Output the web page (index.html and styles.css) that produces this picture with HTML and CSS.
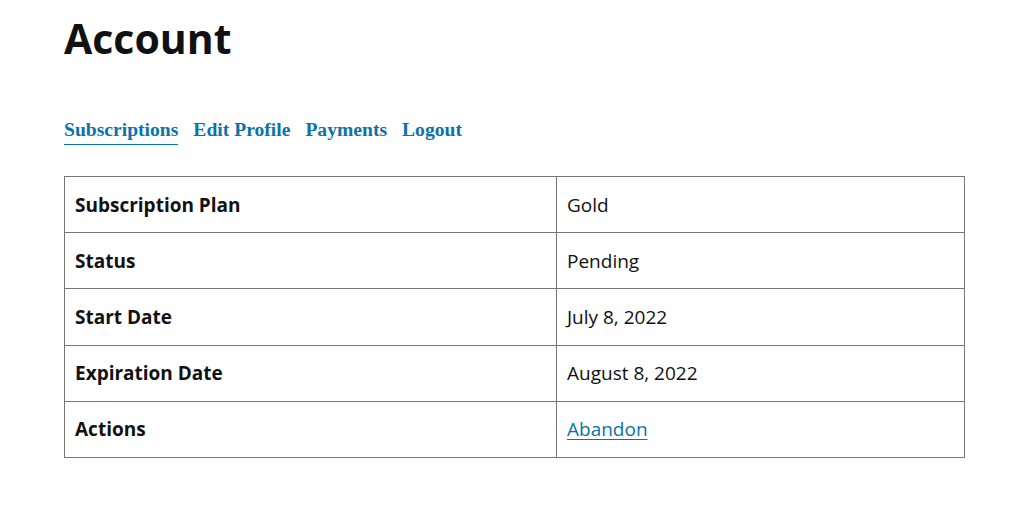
FILE: index.html
```html
<!DOCTYPE html>
<html lang="en">
<head>
    <meta charset="UTF-8">
    <meta name="viewport" content="width=device-width, initial-scale=1.0">
    <title>Account</title>
    <link rel="stylesheet" href="styles.css">
</head>
<body>
    <div class="container">
        <h1>Account</h1>
        <nav class="account-nav">
            <a href="#" class="active">Subscriptions</a>
            <a href="#">Edit Profile</a>
            <a href="#">Payments</a>
            <a href="#">Logout</a>
        </nav>
        <table class="subscription">
            <tr>
                <th>Subscription Plan</th>
                <td>Gold</td>
            </tr>
            <tr>
                <th>Status</th>
                <td>Pending</td>
            </tr>
            <tr>
                <th>Start Date</th>
                <td>July 8, 2022</td>
            </tr>
            <tr>
                <th>Expiration Date</th>
                <td>August 8, 2022</td>
            </tr>
            <tr>
                <th>Actions</th>
                <td><a href="#">Abandon</a></td>
            </tr>
        </table>
    </div>
</body>
</html>
```

FILE: styles.css
```css
body {
    margin: 0;
    font-family: "Open Sans", sans-serif;
    color: #111;
    background: #fff;
}
.container {
    padding-left: 64px;
    width: 901px;
}
h1 {
    margin: 0;
    padding-top: 12px;
    font-size: 41px;
    line-height: 52px;
    font-weight: 700;
}
.account-nav {
    margin-top: 55px;
    display: flex;
    gap: 15px;
}
.account-nav a {
    font-family: "Liberation Serif", serif;
    font-weight: 700;
    font-size: 19.6px;
    line-height: 22px;
    color: #0a73aa;
    text-decoration: none;
    padding-bottom: 3px;
}
.account-nav a.active {
    border-bottom: 1px solid #0a73aa;
}
.subscription {
    margin-top: 31px;
    width: 100%;
    border-collapse: collapse;
    font-size: 19px;
}
.subscription th,
.subscription td {
    border: 1px solid #777;
    height: 55.2px;
    padding: 0 10px;
    text-align: left;
}
.subscription th {
    width: 471px;
    font-weight: 700;
}
.subscription a {
    color: #0a73aa;
    text-underline-offset: 3px;
}
```
